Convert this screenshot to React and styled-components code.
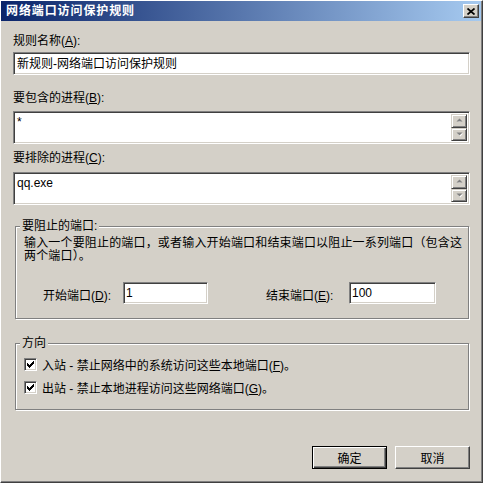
import React from 'react';
import styled, { createGlobalStyle } from 'styled-components';

const FACE = '#D4D0C8';

const GlobalStyle = createGlobalStyle`
  html, body {
    margin: 0;
    padding: 0;
    background: ${FACE};
  }
  body {
    font-family: "Liberation Sans", "Noto Sans CJK SC", sans-serif;
    font-size: 12px;
    color: #000;
  }
`;

const ArrowUp = () => (
  <svg width="7" height="5" viewBox="0 0 7 5">
    <polygon points="2,4 5,4 3.5,2.5" fill="#fff" />
    <polygon points="0.5,3.5 6.5,3.5 3.5,0.5" fill="#808080" />
  </svg>
);

const ArrowDown = () => (
  <svg width="7" height="5" viewBox="0 0 7 5">
    <polygon points="1.5,1.5 7,1.5 4.25,4.5" fill="#fff" />
    <polygon points="0.5,0.5 6.5,0.5 3.5,3.5" fill="#808080" />
  </svg>
);

const CheckMark = () => (
  <svg width="7" height="7" viewBox="0 0 7 7" shapeRendering="crispEdges">
    <polygon points="0,2 2,4 7,-1 7,2 2,7 0,5" fill="#000" />
  </svg>
);

const CloseGlyph = () => (
  <svg width="8" height="7" viewBox="0 0 8 7">
    <path d="M0.5 0.5 L7.5 6.5 M7.5 0.5 L0.5 6.5" stroke="#000" strokeWidth="1.7" />
  </svg>
);

export default function App() {
  return (
    <>
      <GlobalStyle />
      <Window>
        <TitleBar>
          <Title>网络端口访问保护规则</Title>
          <CloseButton type="button"><CloseGlyph /></CloseButton>
        </TitleBar>
        <Body>
          <Label>规则名称(<u>A</u>):</Label>
          <Field $gap={4}>新规则-网络端口访问保护规则</Field>

          <Label $gap={16}>要包含的进程(<u>B</u>):</Label>
          <TextBox $gap={6}>
            <BoxText>*</BoxText>
            <ScrollBar>
              <ScrollButton><ArrowUp /></ScrollButton>
              <Track />
              <ScrollButton><ArrowDown /></ScrollButton>
            </ScrollBar>
          </TextBox>

          <Label $gap={7}>要排除的进程(<u>C</u>):</Label>
          <TextBox $gap={7}>
            <BoxText>qq.exe</BoxText>
            <ScrollBar>
              <ScrollButton><ArrowUp /></ScrollButton>
              <Track />
              <ScrollButton><ArrowDown /></ScrollButton>
            </ScrollBar>
          </TextBox>

          <Group $gap={14} $pad="4px 8px 14px">
            <Legend>要阻止的端口:</Legend>
            <Desc>
              输入一个要阻止的端口，或者输入开始端口和结束端口以阻止一系列端口（包含这
              <br />
              两个端口）。
            </Desc>
            <PortRow>
              <PortLabel $w={80}>开始端口(<u>D</u>):</PortLabel>
              <PortInput $w={85}>1</PortInput>
              <PortLabel $w={83} $gap={58}>结束端口(<u>E</u>):</PortLabel>
              <PortInput $w={87}>100</PortInput>
            </PortRow>
          </Group>

          <Group $gap={17} $pad="3px 8px 10px">
            <Legend>方向</Legend>
            <CheckRow>
              <CheckBox><CheckMark /></CheckBox>
              <span>入站 - 禁止网络中的系统访问这些本地端口(<u>F</u>)。</span>
            </CheckRow>
            <CheckRow>
              <CheckBox><CheckMark /></CheckBox>
              <span>出站 - 禁止本地进程访问这些网络端口(<u>G</u>)。</span>
            </CheckRow>
          </Group>

          <ButtonRow>
            <Button type="button" $default>确定</Button>
            <Button type="button">取消</Button>
          </ButtonRow>
        </Body>
      </Window>
    </>
  );
}

const Window = styled.div`
  box-sizing: border-box;
  width: 483px;
  height: 483px;
  background: ${FACE};
  border-top: 1px solid #fff;
  border-left: 1px solid #fff;
  border-right: 1px solid #404040;
  border-bottom: 1px solid #404040;
  box-shadow: inset -1px -1px 0 #808080;
  padding: 0 1px 1px 0;
  display: flex;
  flex-direction: column;
`;

const TitleBar = styled.div`
  height: 20px;
  display: flex;
  align-items: center;
  justify-content: space-between;
  padding: 0 2px 0 5px;
  background: linear-gradient(to right, #0a246a, #a6caf0);
`;

const Title = styled.div`
  color: #fff;
  font-weight: bold;
  font-size: 12px;
  letter-spacing: 0.9px;
  line-height: 14px;
`;

const CloseButton = styled.button`
  box-sizing: border-box;
  width: 16px;
  height: 14px;
  margin: 0;
  padding: 0;
  display: flex;
  align-items: center;
  justify-content: center;
  background: ${FACE};
  border: 1px solid;
  border-color: #fff #404040 #404040 #fff;
  box-shadow: inset -1px -1px 0 #808080;
`;

const Body = styled.div`
  display: flex;
  flex-direction: column;
  padding: 13px 11px 0 12px;
`;

const Label = styled.div`
  line-height: 14px;
  height: 14px;
  margin-top: ${p => p.$gap || 0}px;
  white-space: nowrap;
`;

const sunken = `
  box-sizing: border-box;
  background: #fff;
  border: 1px solid;
  border-color: #808080 #fff #fff #808080;
  box-shadow: inset 1px 1px 0 #404040, inset -1px -1px 0 ${FACE};
`;

const Field = styled.div`
  ${sunken}
  height: 23px;
  margin-top: ${p => p.$gap || 0}px;
  padding: 0 3px;
  display: flex;
  align-items: center;
  line-height: 14px;
  white-space: nowrap;
`;

const TextBox = styled.div`
  ${sunken}
  height: 33px;
  margin-top: ${p => p.$gap || 0}px;
  padding: 2px;
  display: flex;
`;

const BoxText = styled.div`
  flex: 1;
  padding: 1px 1px;
  line-height: 14px;
`;

const ScrollBar = styled.div`
  width: 16px;
  display: flex;
  flex-direction: column;
`;

const ScrollButton = styled.div`
  box-sizing: border-box;
  height: 14px;
  display: flex;
  align-items: center;
  justify-content: center;
  background: ${FACE};
  border: 1px solid;
  border-color: ${FACE} #404040 #404040 ${FACE};
  box-shadow: inset 1px 1px 0 #fff, inset -1px -1px 0 #808080;
`;

const Track = styled.div`
  flex: 1;
  background: repeating-linear-gradient(90deg, #fff 0 1px, ${FACE} 1px 2px);
`;

const Group = styled.fieldset`
  margin: ${p => p.$gap}px 1px 0 2px;
  padding: ${p => p.$pad};
  min-inline-size: 0;
  border: 1px solid #808080;
  box-shadow: inset 1px 1px 0 #fff, 1px 1px 0 #fff;
`;

const Legend = styled.legend`
  margin-left: -4px;
  padding: 0 2px;
  line-height: 14px;
  background: ${FACE};
`;

const Desc = styled.div`
  line-height: 13px;
  letter-spacing: 0.17px;
  white-space: nowrap;
`;

const PortRow = styled.div`
  display: flex;
  align-items: center;
  height: 22px;
  margin-top: 19px;
  padding-left: 19px;
`;

const PortLabel = styled.div`
  width: ${p => p.$w}px;
  margin-left: ${p => p.$gap || 0}px;
  padding-top: 3px;
  white-space: nowrap;
`;

const PortInput = styled.div`
  ${sunken}
  width: ${p => p.$w}px;
  height: 22px;
  padding: 0 2px;
  display: flex;
  align-items: center;
`;

const CheckRow = styled.label`
  height: 23px;
  display: flex;
  align-items: center;
  gap: 5px;
  white-space: nowrap;
`;

const CheckBox = styled.span`
  ${sunken}
  width: 13px;
  height: 13px;
  display: flex;
  align-items: center;
  justify-content: center;
`;

const ButtonRow = styled.div`
  display: flex;
  justify-content: flex-end;
  gap: 8px;
  margin-top: 36px;
`;

const Button = styled.button`
  box-sizing: border-box;
  width: 75px;
  height: 23px;
  margin: 0;
  padding: 0;
  font-family: inherit;
  font-size: 12px;
  color: #000;
  background: ${FACE};
  border: 1px solid;
  border-color: ${p => (p.$default ? '#000' : '#fff #404040 #404040 #fff')};
  box-shadow: ${p =>
    p.$default
      ? 'inset 1px 1px 0 #fff, inset -1px -1px 0 #404040, inset -2px -2px 0 #808080'
      : `inset -1px -1px 0 #808080, inset 1px 1px 0 ${FACE}`};
`;
